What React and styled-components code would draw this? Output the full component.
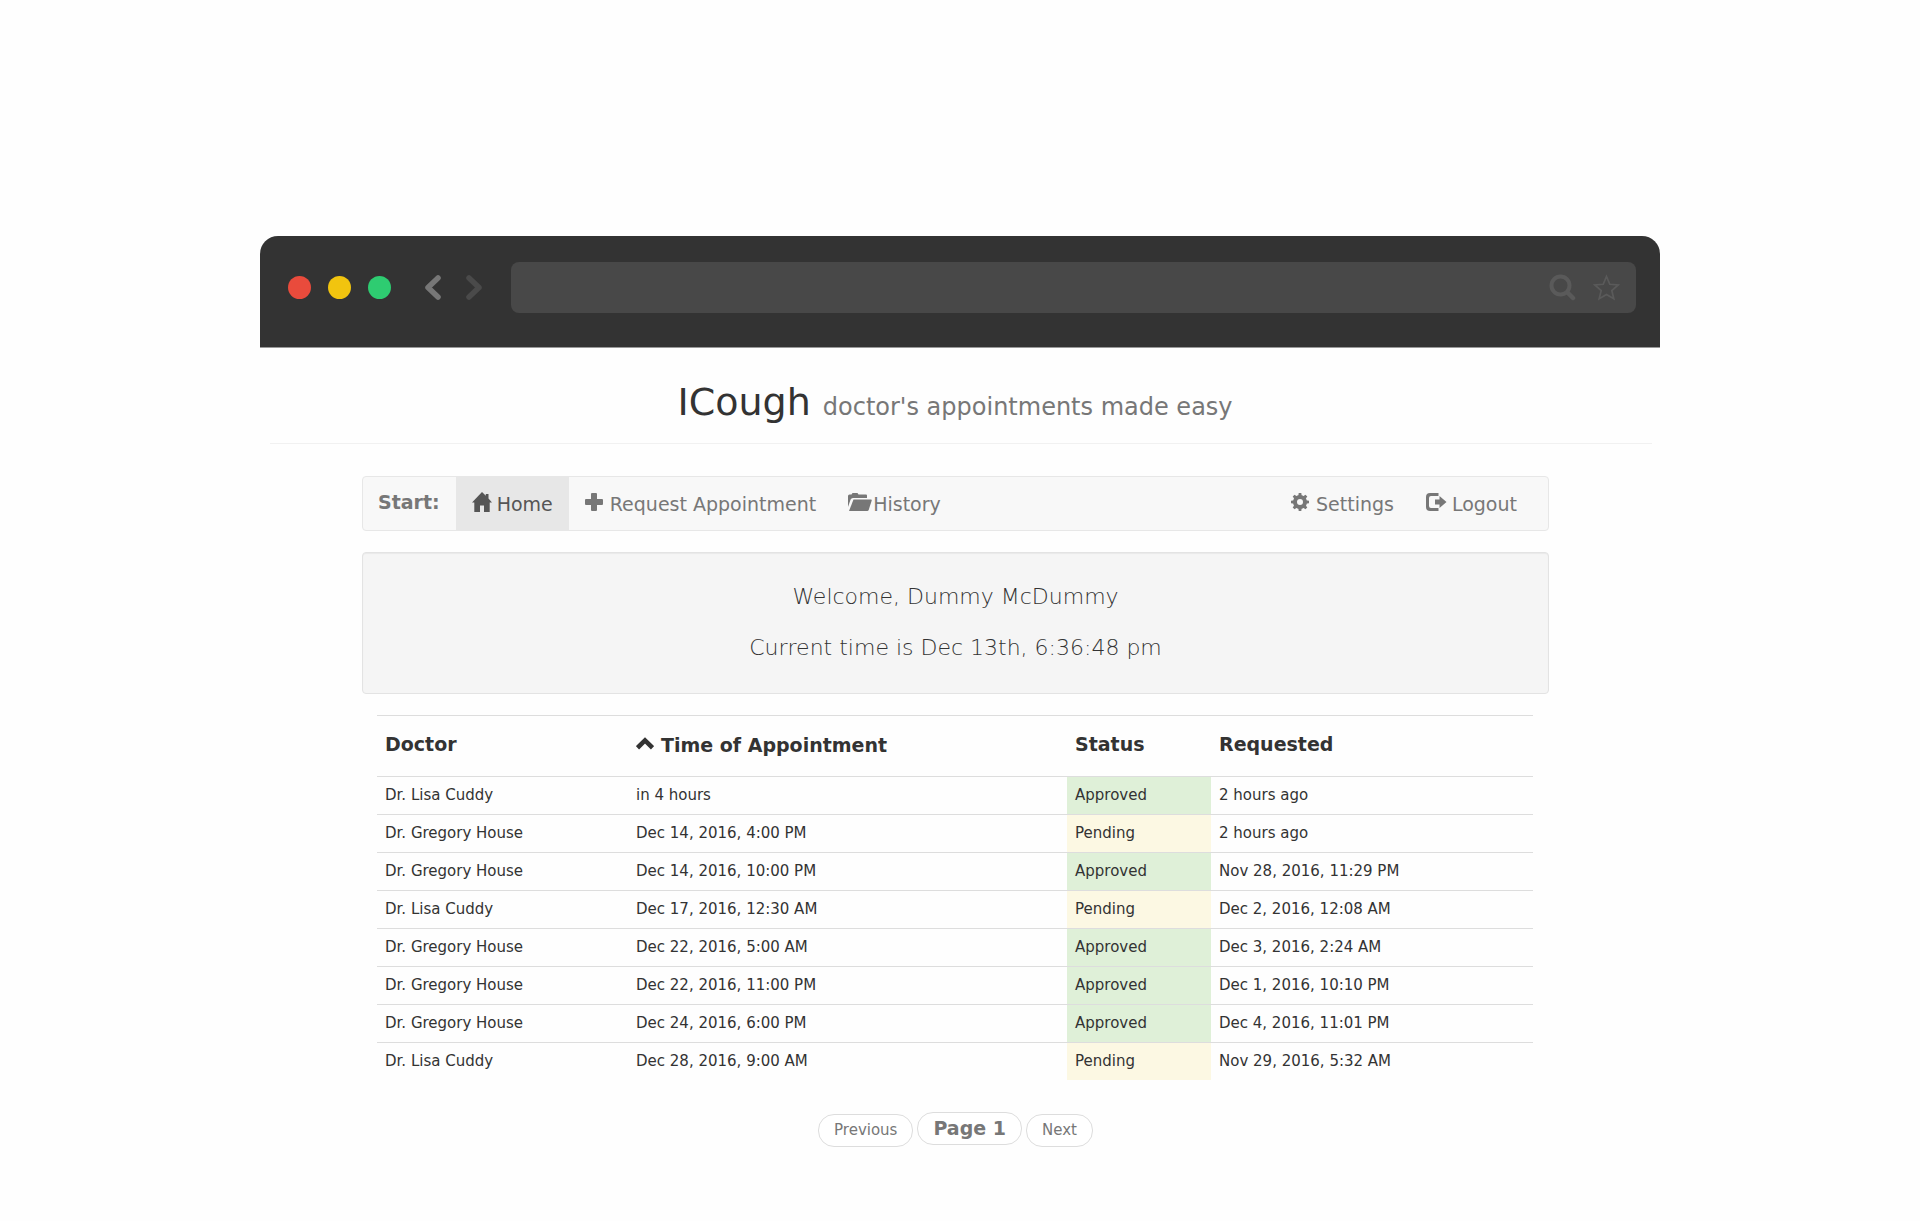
import React from "react";
import styled, { createGlobalStyle } from "styled-components";

const GlobalStyle = createGlobalStyle`
  *, *::before, *::after { box-sizing: border-box; }
  body {
    margin: 0;
    background: #fefefe;
    color: #333;
    font-family: "DejaVu Sans", Verdana, sans-serif;
    font-size: 15px;
    line-height: 21px;
  }
`;

const Page = styled.div`
  padding: 236px 24px 48px;
`;

const Window = styled.div`
  max-width: 1400px;
  margin: 0 auto;
`;

const Chrome = styled.div`
  display: flex;
  align-items: center;
  padding: 26px 24px 34px 28px;
  background: #333;
  border-bottom: 1px solid #999;
  border-radius: 18px 18px 0 0;
`;

const Lights = styled.div`
  display: flex;
  gap: 17px;
`;

const Light = styled.span`
  width: 23px;
  height: 23px;
  border-radius: 50%;
  background: ${(p) => p.$color};
`;

const Arrows = styled.div`
  display: flex;
  gap: 25px;
  margin: 0 29px 0 34px;
`;

const ChromeButton = styled.button`
  display: flex;
  padding: 0;
  border: 0;
  background: none;
  color: ${(p) => p.$color};
`;

const AddressBar = styled.div`
  flex: 1;
  display: flex;
  align-items: center;
  gap: 17px;
  height: 51px;
  padding: 0 16px;
  border-radius: 8px;
  background: #484848;
`;

const Address = styled.input`
  flex: 1;
  min-width: 0;
  border: 0;
  outline: 0;
  background: none;
  color: #ccc;
  font: inherit;
`;

const Header = styled.header`
  margin: 0 8px 32px 10px;
  padding: 32px 12px 14px 0;
  border-bottom: 1px solid #f1f1f1;
  text-align: center;
`;

const Title = styled.h1`
  margin: 0;
  font-size: 38px;
  font-weight: 400;
  line-height: 44px;
`;

const Tagline = styled.small`
  color: #777;
  font-size: 24px;
`;

const Container = styled.main`
  margin: 0 111px 0 102px;
`;

const Navbar = styled.nav`
  display: flex;
  margin-bottom: 21px;
  border: 1px solid #e7e7e7;
  border-radius: 4px;
  background: #f8f8f8;
  color: #777;
  font-size: 19px;
`;

const NavLabel = styled.strong`
  padding: 15px 16px 15px 15px;
`;

const NavGroup = styled.div`
  display: flex;
  margin-left: ${(p) => (p.$end ? "auto" : 0)};
  padding-right: ${(p) => (p.$end ? "15px" : 0)};
`;

const NavLink = styled.a`
  display: flex;
  align-items: center;
  gap: ${(p) => p.$gap}px;
  padding: 15px 16px 14px;
  background: ${(p) => (p.$active ? "#e7e7e7" : "transparent")};
  color: ${(p) => (p.$active ? "#555" : "#777")};
  text-decoration: none;

  svg {
    margin-bottom: 3px;
  }
`;

const Well = styled.section`
  margin-bottom: 21px;
  padding: 28px 20px 29px;
  border: 1px solid #e3e3e3;
  border-radius: 4px;
  background: #f5f5f5;
  box-shadow: inset 0 1px 1px rgba(0, 0, 0, 0.05);
  text-align: center;
`;

const Lead = styled.p`
  margin: 0 0 19px;
  font-size: 22px;
  font-weight: 200;
  line-height: 32px;

  &:last-child {
    margin-bottom: 0;
  }
`;

const TableWrap = styled.div`
  padding: 0 16px 0 15px;
`;

const Table = styled.table`
  width: 100%;
  border-collapse: collapse;
  table-layout: fixed;
`;

const Col = styled.col`
  width: ${(p) => p.$width};
`;

const HeadCell = styled.th`
  height: 61px;
  padding: 0 8px 4px;
  border-top: 1px solid #ddd;
  font-size: 19px;
  text-align: left;
`;

const SortButton = styled.button`
  display: inline-flex;
  align-items: center;
  gap: 7px;
  padding: 5px 0 0;
  border: 0;
  background: none;
  color: inherit;
  font: inherit;
`;

const cellColors = { Approved: "#dff0d8", Pending: "#fcf8e3" };

const Cell = styled.td`
  padding: 8px;
  border-top: 1px solid #ddd;
  background: ${(p) => cellColors[p.$status] || "transparent"};
`;

const Pager = styled.div`
  display: flex;
  justify-content: center;
  gap: 4px;
  padding-top: 32px;
`;

const PagerButton = styled.button`
  margin-top: 2px;
  padding: 5px 15px;
  border: 1px solid #ddd;
  border-radius: 16px;
  background: #fff;
  color: #777;
  font: inherit;
`;

const PagerCurrent = styled.strong`
  height: 33px;
  padding: 5px 15px;
  border: 1px solid #ddd;
  border-radius: 16px;
  background: #fff;
  color: #777;
  font-size: 19px;
`;

const Chevron = ({ flip }) => (
  <svg width="16" height="25" viewBox="0 0 16 25" fill="none" stroke="currentColor" strokeWidth="5.500" strokeLinecap="round" strokeLinejoin="round">
    <path d={flip ? "M3 3l10 9.5L3 22" : "M13 3L3 12.5 13 22"} />
  </svg>
);

const SearchIcon = () => (
  <svg width="27" height="27" viewBox="0 0 27 27" fill="none" stroke="#5a5a5a">
    <circle cx="11.5" cy="11.5" r="9" strokeWidth="4" />
    <path d="M18.5 18.5l5.5 5.5" strokeWidth="4.5" strokeLinecap="round" />
  </svg>
);

const StarIcon = () => (
  <svg width="27" height="27" viewBox="0 0 27 27" fill="none" stroke="#5a5a5a" strokeWidth="1.7">
    <path d="M13.5 2.5l3.3 7.8 8.4.7-6.4 5.5 2 8.3-7.3-4.4-7.3 4.4 2-8.3L1.8 11l8.4-.7z" />
  </svg>
);

const HomeIcon = () => (
  <svg width="20" height="21" viewBox="0 0 20 21" fill="currentColor">
    <path d="M10 0l3.8 3.800V2h2.700v4.500L20 10.500h-2.300V20H12v-6.500H8V20H2.300v-9.500H0z" />
  </svg>
);

const PlusIcon = () => (
  <svg width="18" height="21" viewBox="0 0 18 21" fill="currentColor">
    <path d="M7 1h4q1 0 1 1v5h5q1 0 1 1v4q0 1-1 1h-5v5q0 1-1 1H7q-1 0-1-1v-5H1q-1 0-1-1V8q0-1 1-1h5V2q0-1 1-1z" />
  </svg>
);

const FolderIcon = () => (
  <svg width="24" height="21" viewBox="0 0 24 21" fill="currentColor">
    <path d="M0 15V4q0-1.500 1.500-1.500h2L4.500 1h5l1 1.500h7.500q1 0 1 1V6H5q-1.800 0-2.400 1.600z" />
    <path d="M5.500 7.500h17.500q1 0 .7 1l-3 9.500q-.4 1-1.400 1H1z" />
  </svg>
);

const GearIcon = () => (
  <svg width="18" height="21" viewBox="0 0 18 21">
    <circle cx="9" cy="10" r="5" fill="none" stroke="currentColor" strokeWidth="4" />
    <g fill="currentColor">
      {[0, 45, 90, 135, 180, 225, 270, 315].map((angle) => (
        <path key={angle} d="M7.200 4.500L7.700 1h2.600l.5 3.500z" transform={`rotate(${angle} 9 10)`} />
      ))}
    </g>
  </svg>
);

const LogoutIcon = () => (
  <svg width="21" height="21" viewBox="0 0 21 21" fill="currentColor">
    <path d="M12.500 1H4Q0 1 0 5v10q0 4 4 4h8.500v-3H5q-2 0-2-2V6q0-2 2-2h7.500z" />
    <path d="M13.500 4L20.500 10l-7 6V12.500H9v-5h4.500z" />
  </svg>
);

const SortIcon = () => (
  <svg width="18" height="18" viewBox="0 0 18 18" fill="none" stroke="currentColor" strokeWidth="4.500">
    <path d="M1.500 11.800L9 4.500l7.500 7.300" />
  </svg>
);

const appointments = [
  ["Dr. Lisa Cuddy", "in 4 hours", "Approved", "2 hours ago"],
  ["Dr. Gregory House", "Dec 14, 2016, 4:00 PM", "Pending", "2 hours ago"],
  ["Dr. Gregory House", "Dec 14, 2016, 10:00 PM", "Approved", "Nov 28, 2016, 11:29 PM"],
  ["Dr. Lisa Cuddy", "Dec 17, 2016, 12:30 AM", "Pending", "Dec 2, 2016, 12:08 AM"],
  ["Dr. Gregory House", "Dec 22, 2016, 5:00 AM", "Approved", "Dec 3, 2016, 2:24 AM"],
  ["Dr. Gregory House", "Dec 22, 2016, 11:00 PM", "Approved", "Dec 1, 2016, 10:10 PM"],
  ["Dr. Gregory House", "Dec 24, 2016, 6:00 PM", "Approved", "Dec 4, 2016, 11:01 PM"],
  ["Dr. Lisa Cuddy", "Dec 28, 2016, 9:00 AM", "Pending", "Nov 29, 2016, 5:32 AM"],
];

export default function App() {
  return (
    <Page>
      <GlobalStyle />
      <Window>
        <Chrome>
          <Lights>
            <Light $color="#e94b3c" />
            <Light $color="#f1c40f" />
            <Light $color="#2ecc71" />
          </Lights>
          <Arrows>
            <ChromeButton $color="#777" aria-label="Back"><Chevron /></ChromeButton>
            <ChromeButton $color="#4a4a4a" aria-label="Forward"><Chevron flip /></ChromeButton>
          </Arrows>
          <AddressBar>
            <Address aria-label="Address" type="text" />
            <ChromeButton aria-label="Search"><SearchIcon /></ChromeButton>
            <ChromeButton aria-label="Bookmark"><StarIcon /></ChromeButton>
          </AddressBar>
        </Chrome>

        <Header>
          <Title>ICough <Tagline>doctor's appointments made easy</Tagline></Title>
        </Header>

        <Container>
          <Navbar>
            <NavLabel>Start:</NavLabel>
            <NavGroup>
              <NavLink href="#home" $active $gap={5}><HomeIcon />Home</NavLink>
              <NavLink href="#request" $gap={7}><PlusIcon />Request Appointment</NavLink>
              <NavLink href="#history" $gap={1}><FolderIcon />History</NavLink>
            </NavGroup>
            <NavGroup $end>
              <NavLink href="#settings" $gap={7}><GearIcon />Settings</NavLink>
              <NavLink href="#logout" $gap={5}><LogoutIcon />Logout</NavLink>
            </NavGroup>
          </Navbar>

          <Well>
            <Lead>Welcome, Dummy McDummy</Lead>
            <Lead>Current time is Dec 13th, 6:36:48 pm</Lead>
          </Well>

          <TableWrap>
            <Table>
              <colgroup>
                <Col $width="251px" />
                <Col $width="auto" />
                <Col $width="144px" />
                <Col $width="322px" />
              </colgroup>
              <thead>
                <tr>
                  <HeadCell scope="col">Doctor</HeadCell>
                  <HeadCell scope="col" aria-sort="ascending">
                    <SortButton><SortIcon />Time of Appointment</SortButton>
                  </HeadCell>
                  <HeadCell scope="col">Status</HeadCell>
                  <HeadCell scope="col">Requested</HeadCell>
                </tr>
              </thead>
              <tbody>
                {appointments.map(([doctor, time, status, requested]) => (
                  <tr key={time}>
                    <Cell>{doctor}</Cell>
                    <Cell>{time}</Cell>
                    <Cell $status={status}>{status}</Cell>
                    <Cell>{requested}</Cell>
                  </tr>
                ))}
              </tbody>
            </Table>
          </TableWrap>

          <Pager>
            <PagerButton>Previous</PagerButton>
            <PagerCurrent>Page 1</PagerCurrent>
            <PagerButton>Next</PagerButton>
          </Pager>
        </Container>
      </Window>
    </Page>
  );
}
